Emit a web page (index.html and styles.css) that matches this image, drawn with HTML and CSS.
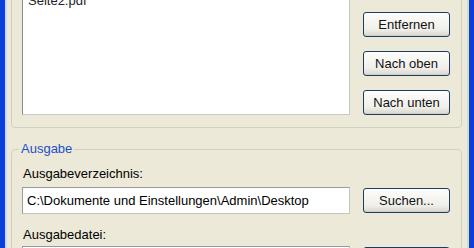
FILE: index.html
```html
<!DOCTYPE html>
<html>
<head>
<meta charset="utf-8">
<link rel="stylesheet" href="styles.css">
</head>
<body>
<div class="window">
  <div class="edge edge-left"></div>
  <div class="content">
    <fieldset class="group group-files">
      <div class="listbox">
        <div class="item">Seite1.pdf</div>
        <div class="item">Seite2.pdf</div>
      </div>
      <div class="btncol">
        <button class="btn">Hinzufügen</button>
        <button class="btn">Entfernen</button>
        <button class="btn">Nach oben</button>
        <button class="btn">Nach unten</button>
      </div>
    </fieldset>
    <fieldset class="group group-out">
      <legend class="legend">Ausgabe</legend>
      <div class="label">Ausgabeverzeichnis:</div>
      <div class="row">
        <div class="field">C:\Dokumente und Einstellungen\Admin\Desktop</div>
        <button class="btn">Suchen...</button>
      </div>
      <div class="label label2">Ausgabedatei:</div>
      <div class="row">
        <div class="field"></div>
        <button class="btn btn-dark" aria-label="Start"></button>
      </div>
    </fieldset>
  </div>
  <div class="edge edge-right"></div>
</div>
</body>
</html>
```
FILE: styles.css
```css
html, body {
  margin: 0;
  padding: 0;
  background: #ece9d8;
  overflow: hidden;
}
body {
  width: 474px;
  height: 248px;
  font-family: "Liberation Sans", Arial, sans-serif;
  font-size: 13px;
  color: #000;
}
.window {
  display: flex;
  height: 248px;
  overflow: hidden;
}
.edge {
  flex: none;
}
.edge-left {
  width: 5px;
  background: #0b3fd6;
  border-right: 2px solid #cfd9f0;
}
.edge-right {
  width: 5px;
  background: #0b3fd6;
  border-left: 2px solid #cfd9f0;
  margin-left: auto;
}
.content {
  flex: 1;
  padding: 0 5px 0 4px;
  display: flex;
  flex-direction: column;
  gap: 14px;
}
.group {
  margin: 0;
  border: 1px solid #d0d0bf;
  border-radius: 4px;
  padding: 0 11px 10px 10px;
  min-width: 0;
}
.group-files {
  margin-top: -28px;
  display: flex;
  gap: 13px;
  align-items: flex-end;
  height: 156px;
  box-sizing: border-box;
  flex: none;
}
.listbox {
  flex: 1;
  align-self: stretch;
  background: #fff;
  border: 1px solid #8c8c8a;
  border-right-color: #c9c9c4;
  border-bottom-color: #c9c9c4;
  padding: 7px 5px 2px;
  overflow: hidden;
  display: flex;
  flex-direction: column;
  justify-content: flex-start;
  margin-top: -4px;
}
.item {
  line-height: 16px;
  color: #222;
}
.btncol {
  display: flex;
  flex-direction: column;
  gap: 14px;
  width: 87px;
  flex: none;
}
.btn {
  font: inherit;
  color: #111;
  height: 25px;
  width: 87px;
  padding: 0;
  border: 1px solid #1c3c64;
  border-radius: 3px;
  background: linear-gradient(#fdfdfb, #f0efea 70%, #d9d7cd);
  box-shadow: inset 0 -1px 0 #d0cec2;
  flex: none;
}
.group-out {
  padding-top: 2px;
  padding-bottom: 10px;
  flex: none;
}
.legend {
  color: #1c4fc8;
  padding: 0 2px;
  margin-left: -3px;
  line-height: 14px;
}
.label {
  line-height: 16px;
  margin: 8px 0 5px 1px;
}
.label2 {
  margin-top: 13px;
  margin-bottom: 3px;
}
.row {
  display: flex;
  align-items: center;
  gap: 13px;
}
.field {
  flex: 1;
  height: 25px;
  line-height: 25px;
  background: #fff;
  border: 1px solid #9a9a98;
  border-right-color: #c4c4c0;
  border-bottom-color: #c4c4c0;
  padding: 0 4px;
  white-space: nowrap;
  overflow: hidden;
}
.btn-dark {
  background: linear-gradient(#3c4a5e, #263245);
}
```
